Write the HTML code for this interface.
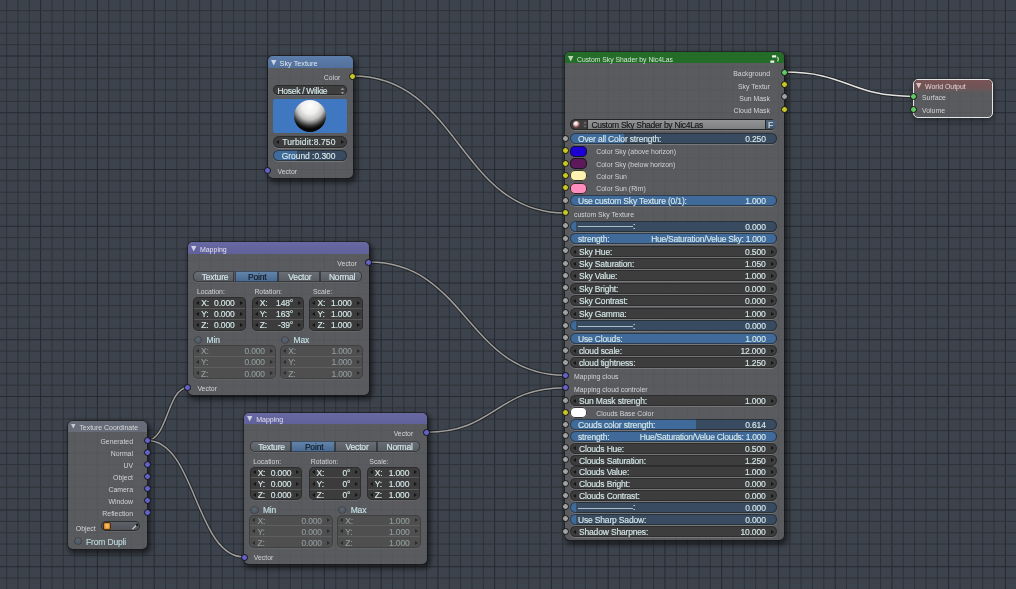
<!DOCTYPE html>
<html><head><meta charset="utf-8"><style>
html,body{margin:0;padding:0;width:1016px;height:589px;overflow:hidden;background:#3d434c;}
body{position:relative;font-family:"Liberation Sans",sans-serif;}
#root{position:absolute;left:0;top:0;width:1016px;height:589px;will-change:transform;}
#root>div,#root>span,#root>svg{position:absolute;}
.t{position:absolute;white-space:pre;}
.tc{text-align:center;}
.ic{position:absolute;overflow:visible;}
.sk{position:absolute;width:7px;height:7px;border-radius:50%;box-sizing:border-box;border:1px solid #111;}
</style></head><body><div id="root">
<svg style="position:absolute;left:0;top:0" width="1016" height="589"><rect x="6.1" y="0" width="1" height="589" fill="#2e333a"/><rect x="17.45" y="0" width="1" height="589" fill="#2e333a"/><rect x="28.8" y="0" width="1" height="589" fill="#2e333a"/><rect x="40.15" y="0" width="1" height="589" fill="#262a30"/><rect x="51.5" y="0" width="1" height="589" fill="#2e333a"/><rect x="62.85" y="0" width="1" height="589" fill="#2e333a"/><rect x="74.2" y="0" width="1" height="589" fill="#2e333a"/><rect x="85.55" y="0" width="1" height="589" fill="#2e333a"/><rect x="96.9" y="0" width="1" height="589" fill="#262a30"/><rect x="108.25" y="0" width="1" height="589" fill="#2e333a"/><rect x="119.6" y="0" width="1" height="589" fill="#2e333a"/><rect x="130.95" y="0" width="1" height="589" fill="#2e333a"/><rect x="142.3" y="0" width="1" height="589" fill="#2e333a"/><rect x="153.65" y="0" width="1" height="589" fill="#262a30"/><rect x="165" y="0" width="1" height="589" fill="#2e333a"/><rect x="176.35" y="0" width="1" height="589" fill="#2e333a"/><rect x="187.7" y="0" width="1" height="589" fill="#2e333a"/><rect x="199.05" y="0" width="1" height="589" fill="#2e333a"/><rect x="210.4" y="0" width="1" height="589" fill="#262a30"/><rect x="221.75" y="0" width="1" height="589" fill="#2e333a"/><rect x="233.1" y="0" width="1" height="589" fill="#2e333a"/><rect x="244.45" y="0" width="1" height="589" fill="#2e333a"/><rect x="255.8" y="0" width="1" height="589" fill="#2e333a"/><rect x="267.15" y="0" width="1" height="589" fill="#262a30"/><rect x="278.5" y="0" width="1" height="589" fill="#2e333a"/><rect x="289.85" y="0" width="1" height="589" fill="#2e333a"/><rect x="301.2" y="0" width="1" height="589" fill="#2e333a"/><rect x="312.55" y="0" width="1" height="589" fill="#2e333a"/><rect x="323.9" y="0" width="1" height="589" fill="#262a30"/><rect x="335.25" y="0" width="1" height="589" fill="#2e333a"/><rect x="346.6" y="0" width="1" height="589" fill="#2e333a"/><rect x="357.95" y="0" width="1" height="589" fill="#2e333a"/><rect x="369.3" y="0" width="1" height="589" fill="#2e333a"/><rect x="380.65" y="0" width="1" height="589" fill="#262a30"/><rect x="392" y="0" width="1" height="589" fill="#2e333a"/><rect x="403.35" y="0" width="1" height="589" fill="#2e333a"/><rect x="414.7" y="0" width="1" height="589" fill="#2e333a"/><rect x="426.05" y="0" width="1" height="589" fill="#2e333a"/><rect x="437.4" y="0" width="1" height="589" fill="#262a30"/><rect x="448.75" y="0" width="1" height="589" fill="#2e333a"/><rect x="460.1" y="0" width="1" height="589" fill="#2e333a"/><rect x="471.45" y="0" width="1" height="589" fill="#2e333a"/><rect x="482.8" y="0" width="1" height="589" fill="#2e333a"/><rect x="494.15" y="0" width="1" height="589" fill="#262a30"/><rect x="505.5" y="0" width="1" height="589" fill="#2e333a"/><rect x="516.85" y="0" width="1" height="589" fill="#2e333a"/><rect x="528.2" y="0" width="1" height="589" fill="#2e333a"/><rect x="539.55" y="0" width="1" height="589" fill="#2e333a"/><rect x="550.9" y="0" width="1" height="589" fill="#262a30"/><rect x="562.25" y="0" width="1" height="589" fill="#2e333a"/><rect x="573.6" y="0" width="1" height="589" fill="#2e333a"/><rect x="584.95" y="0" width="1" height="589" fill="#2e333a"/><rect x="596.3" y="0" width="1" height="589" fill="#2e333a"/><rect x="607.65" y="0" width="1" height="589" fill="#262a30"/><rect x="619" y="0" width="1" height="589" fill="#2e333a"/><rect x="630.35" y="0" width="1" height="589" fill="#2e333a"/><rect x="641.7" y="0" width="1" height="589" fill="#2e333a"/><rect x="653.05" y="0" width="1" height="589" fill="#2e333a"/><rect x="664.4" y="0" width="1" height="589" fill="#262a30"/><rect x="675.75" y="0" width="1" height="589" fill="#2e333a"/><rect x="687.1" y="0" width="1" height="589" fill="#2e333a"/><rect x="698.45" y="0" width="1" height="589" fill="#2e333a"/><rect x="709.8" y="0" width="1" height="589" fill="#2e333a"/><rect x="721.15" y="0" width="1" height="589" fill="#262a30"/><rect x="732.5" y="0" width="1" height="589" fill="#2e333a"/><rect x="743.85" y="0" width="1" height="589" fill="#2e333a"/><rect x="755.2" y="0" width="1" height="589" fill="#2e333a"/><rect x="766.55" y="0" width="1" height="589" fill="#2e333a"/><rect x="777.9" y="0" width="1" height="589" fill="#262a30"/><rect x="789.25" y="0" width="1" height="589" fill="#2e333a"/><rect x="800.6" y="0" width="1" height="589" fill="#2e333a"/><rect x="811.95" y="0" width="1" height="589" fill="#2e333a"/><rect x="823.3" y="0" width="1" height="589" fill="#2e333a"/><rect x="834.65" y="0" width="1" height="589" fill="#262a30"/><rect x="846" y="0" width="1" height="589" fill="#2e333a"/><rect x="857.35" y="0" width="1" height="589" fill="#2e333a"/><rect x="868.7" y="0" width="1" height="589" fill="#2e333a"/><rect x="880.05" y="0" width="1" height="589" fill="#2e333a"/><rect x="891.4" y="0" width="1" height="589" fill="#262a30"/><rect x="902.75" y="0" width="1" height="589" fill="#2e333a"/><rect x="914.1" y="0" width="1" height="589" fill="#2e333a"/><rect x="925.45" y="0" width="1" height="589" fill="#2e333a"/><rect x="936.8" y="0" width="1" height="589" fill="#2e333a"/><rect x="948.15" y="0" width="1" height="589" fill="#262a30"/><rect x="959.5" y="0" width="1" height="589" fill="#2e333a"/><rect x="970.85" y="0" width="1" height="589" fill="#2e333a"/><rect x="982.2" y="0" width="1" height="589" fill="#2e333a"/><rect x="993.55" y="0" width="1" height="589" fill="#2e333a"/><rect x="1004.9" y="0" width="1" height="589" fill="#262a30"/><rect x="1016.25" y="0" width="1" height="589" fill="#2e333a"/><rect x="0" y="10.1" width="1016" height="1" fill="#2e333a"/><rect x="0" y="21.45" width="1016" height="1" fill="#2e333a"/><rect x="0" y="32.8" width="1016" height="1" fill="#2e333a"/><rect x="0" y="44.15" width="1016" height="1" fill="#2e333a"/><rect x="0" y="55.5" width="1016" height="1" fill="#262a30"/><rect x="0" y="66.85" width="1016" height="1" fill="#2e333a"/><rect x="0" y="78.2" width="1016" height="1" fill="#2e333a"/><rect x="0" y="89.55" width="1016" height="1" fill="#2e333a"/><rect x="0" y="100.9" width="1016" height="1" fill="#2e333a"/><rect x="0" y="112.25" width="1016" height="1" fill="#262a30"/><rect x="0" y="123.6" width="1016" height="1" fill="#2e333a"/><rect x="0" y="134.95" width="1016" height="1" fill="#2e333a"/><rect x="0" y="146.3" width="1016" height="1" fill="#2e333a"/><rect x="0" y="157.65" width="1016" height="1" fill="#2e333a"/><rect x="0" y="169" width="1016" height="1" fill="#262a30"/><rect x="0" y="180.35" width="1016" height="1" fill="#2e333a"/><rect x="0" y="191.7" width="1016" height="1" fill="#2e333a"/><rect x="0" y="203.05" width="1016" height="1" fill="#2e333a"/><rect x="0" y="214.4" width="1016" height="1" fill="#2e333a"/><rect x="0" y="225.75" width="1016" height="1" fill="#262a30"/><rect x="0" y="237.1" width="1016" height="1" fill="#2e333a"/><rect x="0" y="248.45" width="1016" height="1" fill="#2e333a"/><rect x="0" y="259.8" width="1016" height="1" fill="#2e333a"/><rect x="0" y="271.15" width="1016" height="1" fill="#2e333a"/><rect x="0" y="282.5" width="1016" height="1" fill="#262a30"/><rect x="0" y="293.85" width="1016" height="1" fill="#2e333a"/><rect x="0" y="305.2" width="1016" height="1" fill="#2e333a"/><rect x="0" y="316.55" width="1016" height="1" fill="#2e333a"/><rect x="0" y="327.9" width="1016" height="1" fill="#2e333a"/><rect x="0" y="339.25" width="1016" height="1" fill="#262a30"/><rect x="0" y="350.6" width="1016" height="1" fill="#2e333a"/><rect x="0" y="361.95" width="1016" height="1" fill="#2e333a"/><rect x="0" y="373.3" width="1016" height="1" fill="#2e333a"/><rect x="0" y="384.65" width="1016" height="1" fill="#2e333a"/><rect x="0" y="396" width="1016" height="1" fill="#262a30"/><rect x="0" y="407.35" width="1016" height="1" fill="#2e333a"/><rect x="0" y="418.7" width="1016" height="1" fill="#2e333a"/><rect x="0" y="430.05" width="1016" height="1" fill="#2e333a"/><rect x="0" y="441.4" width="1016" height="1" fill="#2e333a"/><rect x="0" y="452.75" width="1016" height="1" fill="#262a30"/><rect x="0" y="464.1" width="1016" height="1" fill="#2e333a"/><rect x="0" y="475.45" width="1016" height="1" fill="#2e333a"/><rect x="0" y="486.8" width="1016" height="1" fill="#2e333a"/><rect x="0" y="498.15" width="1016" height="1" fill="#2e333a"/><rect x="0" y="509.5" width="1016" height="1" fill="#262a30"/><rect x="0" y="520.85" width="1016" height="1" fill="#2e333a"/><rect x="0" y="532.2" width="1016" height="1" fill="#2e333a"/><rect x="0" y="543.55" width="1016" height="1" fill="#2e333a"/><rect x="0" y="554.9" width="1016" height="1" fill="#2e333a"/><rect x="0" y="566.25" width="1016" height="1" fill="#262a30"/><rect x="0" y="577.6" width="1016" height="1" fill="#2e333a"/><rect x="0" y="588.95" width="1016" height="1" fill="#2e333a"/></svg><svg style="position:absolute;left:0;top:0" width="1016" height="589"><path d="M353 76 C459 76 459 213 565 213" stroke="#1e1e1e" stroke-opacity="0.75" stroke-width="3.4" fill="none"/><path d="M353 76 C459 76 459 213 565 213" stroke="#9e9e9e" stroke-width="1.5" fill="none"/><path d="M369 262.1 C467 262.1 467 375.2 565 375.2" stroke="#1e1e1e" stroke-opacity="0.75" stroke-width="3.4" fill="none"/><path d="M369 262.1 C467 262.1 467 375.2 565 375.2" stroke="#9e9e9e" stroke-width="1.5" fill="none"/><path d="M426.6 432.2 C495.8 432.2 495.8 387.7 565 387.7" stroke="#1e1e1e" stroke-opacity="0.75" stroke-width="3.4" fill="none"/><path d="M426.6 432.2 C495.8 432.2 495.8 387.7 565 387.7" stroke="#9e9e9e" stroke-width="1.5" fill="none"/><path d="M147 440.4 C167.5 440.4 167.5 387.4 188 387.4" stroke="#1e1e1e" stroke-opacity="0.75" stroke-width="3.4" fill="none"/><path d="M147 440.4 C167.5 440.4 167.5 387.4 188 387.4" stroke="#9e9e9e" stroke-width="1.5" fill="none"/><path d="M147 440.4 C195.6 440.4 195.6 557 244.2 557" stroke="#1e1e1e" stroke-opacity="0.75" stroke-width="3.4" fill="none"/><path d="M147 440.4 C195.6 440.4 195.6 557 244.2 557" stroke="#9e9e9e" stroke-width="1.5" fill="none"/><path d="M784 72.1 C848.7 72.1 848.7 96.4 913.4 96.4" stroke="#1e1e1e" stroke-opacity="0.75" stroke-width="3.4" fill="none"/><path d="M784 72.1 C848.7 72.1 848.7 96.4 913.4 96.4" stroke="#e4e4e4" stroke-width="1.5" fill="none"/></svg><div style="left:565px;top:52px;width:219px;height:487.8px;border-radius:5px;background:rgba(98,97,100,0.8);overflow:hidden;box-shadow:0 0 0 1px rgba(20,20,20,0.5),2px 3px 5px 2px rgba(0,0,0,0.5);"><div style="position:absolute;left:0;top:0;width:100%;height:11.2px;background:#246d28"></div></div><svg class="ic" style="left:568.2px;top:55.8px" width="6" height="6"><path d="M0 0 H5.4 L2.7 5.4 Z" fill="#d4e8d2" opacity="0.85"/></svg><span class="t" style="left:577px;top:53.9px;line-height:12px;font-size:6.8px;color:#d4e8d2;">Custom Sky Shader by Nic4Las</span><svg class="ic" style="left:769px;top:53.5px" width="12" height="10"><rect x="3" y="1.3" width="4.2" height="2.3" rx="0.6" fill="#f0f4ee"/><rect x="1.3" y="6.5" width="4" height="2.3" rx="0.6" fill="#f0f4ee"/><path d="M8.3 2.8 Q10.2 4.9 8.6 7.5" stroke="#b8dcb8" stroke-width="1.1" fill="none"/></svg><span class="t" style="right:246px;top:68.3px;line-height:12px;font-size:6.9px;color:#d4d4d4;">Background</span><span class="t" style="right:246px;top:80.6px;line-height:12px;font-size:6.9px;color:#d4d4d4;">Sky Textur</span><span class="t" style="right:246px;top:93.1px;line-height:12px;font-size:6.9px;color:#d4d4d4;">Sun Mask</span><span class="t" style="right:246px;top:105.2px;line-height:12px;font-size:6.9px;color:#d4d4d4;">Cloud Mask</span><div style="left:570.1px;top:119.3px;width:206.4px;height:10.4px;border-radius:5.2px;background:#3d3d3d;box-shadow:inset 0 0 0 1px rgba(25,25,25,0.7),0 0.9px 0 rgba(215,215,215,0.24)"></div><div style="left:587.9px;top:120px;width:177.4px;height:9px;background:linear-gradient(#929496,#7e8082);"></div><div style="left:587.4px;top:119.3px;width:0.8px;height:10.4px;background:#2a2a2a"></div><div style="left:765.3px;top:119.3px;width:0.8px;height:10.4px;background:#2a2a2a"></div><div style="left:766.1px;top:119.8px;width:10.6px;height:9.4px;border-radius:0 4.7px 4.7px 0;background:linear-gradient(#52657a,#44556a);"></div><span class="t tc" style="left:670.4px;width:200px;top:118.8px;line-height:12px;font-size:8.5px;color:#cfe0ea;letter-spacing:-0.17px;-webkit-text-stroke:0.14px currentColor;">F</span><span class="t" style="left:591.4px;top:118.9px;line-height:12px;font-size:8.5px;color:#161616;-webkit-text-stroke:0.14px currentColor;letter-spacing:-0.3px;">Custom Sky Shader by Nic4Las</span><div style="left:573.1px;top:120.8px;width:7px;height:7px;border-radius:50%;background:radial-gradient(circle at 40% 35%,#fff 0,#e8dede 25%,#9a5a5a 55%,#3a2a2a 85%)"></div><svg class="ic" style="left:582.6px;top:121px" width="4" height="7"><path d="M0.3 2.6 L2 0.6 L3.7 2.6 Z M0.3 4.4 L2 6.4 L3.7 4.4 Z" fill="#777"/></svg><div style="left:570px;top:133.15px;width:206.5px;height:11px;border-radius:5.5px;background:linear-gradient(to right,#3f6a99 0,#3f6a99 54.38px,#394b60 54.38px);box-shadow:inset 0 0 0 1px rgba(30,30,30,0.6),0 0.9px 0 rgba(215,215,215,0.24)"></div><span class="t" style="left:578px;top:133.15px;line-height:12px;font-size:8.5px;color:#d6e8ea;letter-spacing:-0.17px;-webkit-text-stroke:0.14px currentColor;">Over all Color strength:</span><span class="t" style="right:250.3px;top:133.15px;line-height:12px;font-size:8.5px;color:#d6e8ea;letter-spacing:-0.17px;-webkit-text-stroke:0.14px currentColor;">0.250</span><div style="left:570.2px;top:145.5px;width:16.6px;height:11px;border-radius:5px;background:#1c00d2;box-shadow:inset 0 0 0 1px rgba(20,20,20,0.85)"></div><span class="t" style="left:596.3px;top:146px;line-height:12px;font-size:6.9px;color:#d4d4d4;">Color Sky (above horizon)</span><div style="left:570.2px;top:158px;width:16.6px;height:11px;border-radius:5px;background:#5c1a5a;box-shadow:inset 0 0 0 1px rgba(20,20,20,0.85)"></div><span class="t" style="left:596.3px;top:158.5px;line-height:12px;font-size:6.9px;color:#d4d4d4;">Color Sky (below horizon)</span><div style="left:570.2px;top:170.4px;width:16.6px;height:11px;border-radius:5px;background:#fff2b0;box-shadow:inset 0 0 0 1px rgba(20,20,20,0.85)"></div><span class="t" style="left:596.3px;top:170.9px;line-height:12px;font-size:6.9px;color:#d4d4d4;">Color Sun</span><div style="left:570.2px;top:182.8px;width:16.6px;height:11px;border-radius:5px;background:#ff8ebe;box-shadow:inset 0 0 0 1px rgba(20,20,20,0.85)"></div><span class="t" style="left:596.3px;top:183.3px;line-height:12px;font-size:6.9px;color:#d4d4d4;">Color Sun (Rim)</span><div style="left:570px;top:195.35px;width:206.5px;height:11px;border-radius:5.5px;background:linear-gradient(to right,#3f6a99 0,#3f6a99 206.5px,#394b60 206.5px);box-shadow:inset 0 0 0 1px rgba(30,30,30,0.6),0 0.9px 0 rgba(215,215,215,0.24)"></div><span class="t" style="left:578px;top:195.35px;line-height:12px;font-size:8.5px;color:#d6e8ea;letter-spacing:-0.17px;-webkit-text-stroke:0.14px currentColor;">Use custom Sky Texture (0/1):</span><span class="t" style="right:250.3px;top:195.35px;line-height:12px;font-size:8.5px;color:#d6e8ea;letter-spacing:-0.17px;-webkit-text-stroke:0.14px currentColor;">1.000</span><span class="t" style="left:574px;top:209.1px;line-height:12px;font-size:6.9px;color:#d4d4d4;">custom Sky Texture</span><div style="left:570px;top:220.65px;width:206.5px;height:11px;border-radius:5.5px;background:linear-gradient(to right,#3f6a99 0,#3f6a99 5.5px,#394b60 5.5px);box-shadow:inset 0 0 0 1px rgba(30,30,30,0.6),0 0.9px 0 rgba(215,215,215,0.24)"></div><span class="t" style="right:250.3px;top:220.65px;line-height:12px;font-size:8.5px;color:#d6e8ea;letter-spacing:-0.17px;-webkit-text-stroke:0.14px currentColor;">0.000</span><div style="left:578px;top:226.3px;width:55px;height:0.9px;background:#a9bfcc"></div><span class="t" style="left:633px;top:220.1px;line-height:12px;font-size:8.5px;color:#d6e8ea;letter-spacing:-0.17px;-webkit-text-stroke:0.14px currentColor;">:</span><div style="left:570px;top:233.35px;width:206.5px;height:11px;border-radius:5.5px;background:linear-gradient(to right,#3f6a99 0,#3f6a99 206.5px,#394b60 206.5px);box-shadow:inset 0 0 0 1px rgba(30,30,30,0.6),0 0.9px 0 rgba(215,215,215,0.24)"></div><span class="t" style="left:578px;top:233.35px;line-height:12px;font-size:8.5px;color:#d6e8ea;letter-spacing:-0.17px;-webkit-text-stroke:0.14px currentColor;">strength:</span><span class="t" style="right:250.3px;top:233.35px;line-height:12px;font-size:8.5px;color:#d6e8ea;-webkit-text-stroke:0.14px currentColor;letter-spacing:-0.27px;">Hue/Saturation/Velue Sky: 1.000</span><div style="left:570px;top:245.85px;width:206.5px;height:11px;border-radius:5.5px;background:#3d3d3d;box-shadow:inset 0 0 0 1px rgba(30,30,30,0.5),0 0.9px 0 rgba(215,215,215,0.24)"></div><svg class="ic" style="left:573px;top:249.55px" width="3" height="4"><path d="M3 0 L0 2 L3 4 Z" fill="#161616"/></svg><svg class="ic" style="left:770.5px;top:249.55px" width="3" height="4"><path d="M0 0 L3 2 L0 4 Z" fill="#161616"/></svg><span class="t" style="left:579px;top:245.85px;line-height:12px;font-size:8.5px;color:#d6e8ea;letter-spacing:-0.17px;-webkit-text-stroke:0.14px currentColor;">Sky Hue:</span><span class="t" style="right:250.5px;top:245.85px;line-height:12px;font-size:8.5px;color:#d6e8ea;letter-spacing:-0.17px;-webkit-text-stroke:0.14px currentColor;">0.500</span><div style="left:570px;top:258.05px;width:206.5px;height:11px;border-radius:5.5px;background:#3d3d3d;box-shadow:inset 0 0 0 1px rgba(30,30,30,0.5),0 0.9px 0 rgba(215,215,215,0.24)"></div><svg class="ic" style="left:573px;top:261.75px" width="3" height="4"><path d="M3 0 L0 2 L3 4 Z" fill="#161616"/></svg><svg class="ic" style="left:770.5px;top:261.75px" width="3" height="4"><path d="M0 0 L3 2 L0 4 Z" fill="#161616"/></svg><span class="t" style="left:579px;top:258.05px;line-height:12px;font-size:8.5px;color:#d6e8ea;letter-spacing:-0.17px;-webkit-text-stroke:0.14px currentColor;">Sky Saturation:</span><span class="t" style="right:250.5px;top:258.05px;line-height:12px;font-size:8.5px;color:#d6e8ea;letter-spacing:-0.17px;-webkit-text-stroke:0.14px currentColor;">1.050</span><div style="left:570px;top:270.45px;width:206.5px;height:11px;border-radius:5.5px;background:#3d3d3d;box-shadow:inset 0 0 0 1px rgba(30,30,30,0.5),0 0.9px 0 rgba(215,215,215,0.24)"></div><svg class="ic" style="left:573px;top:274.15px" width="3" height="4"><path d="M3 0 L0 2 L3 4 Z" fill="#161616"/></svg><svg class="ic" style="left:770.5px;top:274.15px" width="3" height="4"><path d="M0 0 L3 2 L0 4 Z" fill="#161616"/></svg><span class="t" style="left:579px;top:270.45px;line-height:12px;font-size:8.5px;color:#d6e8ea;letter-spacing:-0.17px;-webkit-text-stroke:0.14px currentColor;">Sky Value:</span><span class="t" style="right:250.5px;top:270.45px;line-height:12px;font-size:8.5px;color:#d6e8ea;letter-spacing:-0.17px;-webkit-text-stroke:0.14px currentColor;">1.000</span><div style="left:570px;top:282.85px;width:206.5px;height:11px;border-radius:5.5px;background:#3d3d3d;box-shadow:inset 0 0 0 1px rgba(30,30,30,0.5),0 0.9px 0 rgba(215,215,215,0.24)"></div><svg class="ic" style="left:573px;top:286.55px" width="3" height="4"><path d="M3 0 L0 2 L3 4 Z" fill="#161616"/></svg><svg class="ic" style="left:770.5px;top:286.55px" width="3" height="4"><path d="M0 0 L3 2 L0 4 Z" fill="#161616"/></svg><span class="t" style="left:579px;top:282.85px;line-height:12px;font-size:8.5px;color:#d6e8ea;letter-spacing:-0.17px;-webkit-text-stroke:0.14px currentColor;">Sky Bright:</span><span class="t" style="right:250.5px;top:282.85px;line-height:12px;font-size:8.5px;color:#d6e8ea;letter-spacing:-0.17px;-webkit-text-stroke:0.14px currentColor;">0.000</span><div style="left:570px;top:295.35px;width:206.5px;height:11px;border-radius:5.5px;background:#3d3d3d;box-shadow:inset 0 0 0 1px rgba(30,30,30,0.5),0 0.9px 0 rgba(215,215,215,0.24)"></div><svg class="ic" style="left:573px;top:299.05px" width="3" height="4"><path d="M3 0 L0 2 L3 4 Z" fill="#161616"/></svg><svg class="ic" style="left:770.5px;top:299.05px" width="3" height="4"><path d="M0 0 L3 2 L0 4 Z" fill="#161616"/></svg><span class="t" style="left:579px;top:295.35px;line-height:12px;font-size:8.5px;color:#d6e8ea;letter-spacing:-0.17px;-webkit-text-stroke:0.14px currentColor;">Sky Contrast:</span><span class="t" style="right:250.5px;top:295.35px;line-height:12px;font-size:8.5px;color:#d6e8ea;letter-spacing:-0.17px;-webkit-text-stroke:0.14px currentColor;">0.000</span><div style="left:570px;top:307.85px;width:206.5px;height:11px;border-radius:5.5px;background:#3d3d3d;box-shadow:inset 0 0 0 1px rgba(30,30,30,0.5),0 0.9px 0 rgba(215,215,215,0.24)"></div><svg class="ic" style="left:573px;top:311.55px" width="3" height="4"><path d="M3 0 L0 2 L3 4 Z" fill="#161616"/></svg><svg class="ic" style="left:770.5px;top:311.55px" width="3" height="4"><path d="M0 0 L3 2 L0 4 Z" fill="#161616"/></svg><span class="t" style="left:579px;top:307.85px;line-height:12px;font-size:8.5px;color:#d6e8ea;letter-spacing:-0.17px;-webkit-text-stroke:0.14px currentColor;">Sky Gamma:</span><span class="t" style="right:250.5px;top:307.85px;line-height:12px;font-size:8.5px;color:#d6e8ea;letter-spacing:-0.17px;-webkit-text-stroke:0.14px currentColor;">1.000</span><div style="left:570px;top:320.35px;width:206.5px;height:11px;border-radius:5.5px;background:linear-gradient(to right,#3f6a99 0,#3f6a99 5.5px,#394b60 5.5px);box-shadow:inset 0 0 0 1px rgba(30,30,30,0.6),0 0.9px 0 rgba(215,215,215,0.24)"></div><span class="t" style="right:250.3px;top:320.35px;line-height:12px;font-size:8.5px;color:#d6e8ea;letter-spacing:-0.17px;-webkit-text-stroke:0.14px currentColor;">0.000</span><div style="left:578px;top:326px;width:55px;height:0.9px;background:#a9bfcc"></div><span class="t" style="left:633px;top:319.8px;line-height:12px;font-size:8.5px;color:#d6e8ea;letter-spacing:-0.17px;-webkit-text-stroke:0.14px currentColor;">:</span><div style="left:570px;top:332.65px;width:206.5px;height:11px;border-radius:5.5px;background:linear-gradient(to right,#3f6a99 0,#3f6a99 206.5px,#394b60 206.5px);box-shadow:inset 0 0 0 1px rgba(30,30,30,0.6),0 0.9px 0 rgba(215,215,215,0.24)"></div><span class="t" style="left:578px;top:332.65px;line-height:12px;font-size:8.5px;color:#d6e8ea;letter-spacing:-0.17px;-webkit-text-stroke:0.14px currentColor;">Use Clouds:</span><span class="t" style="right:250.3px;top:332.65px;line-height:12px;font-size:8.5px;color:#d6e8ea;letter-spacing:-0.17px;-webkit-text-stroke:0.14px currentColor;">1.000</span><div style="left:570px;top:345.05px;width:206.5px;height:11px;border-radius:5.5px;background:#3d3d3d;box-shadow:inset 0 0 0 1px rgba(30,30,30,0.5),0 0.9px 0 rgba(215,215,215,0.24)"></div><svg class="ic" style="left:573px;top:348.75px" width="3" height="4"><path d="M3 0 L0 2 L3 4 Z" fill="#161616"/></svg><svg class="ic" style="left:770.5px;top:348.75px" width="3" height="4"><path d="M0 0 L3 2 L0 4 Z" fill="#161616"/></svg><span class="t" style="left:579px;top:345.05px;line-height:12px;font-size:8.5px;color:#d6e8ea;letter-spacing:-0.17px;-webkit-text-stroke:0.14px currentColor;">cloud scale:</span><span class="t" style="right:250.5px;top:345.05px;line-height:12px;font-size:8.5px;color:#d6e8ea;letter-spacing:-0.17px;-webkit-text-stroke:0.14px currentColor;">12.000</span><div style="left:570px;top:357.45px;width:206.5px;height:11px;border-radius:5.5px;background:#3d3d3d;box-shadow:inset 0 0 0 1px rgba(30,30,30,0.5),0 0.9px 0 rgba(215,215,215,0.24)"></div><svg class="ic" style="left:573px;top:361.15px" width="3" height="4"><path d="M3 0 L0 2 L3 4 Z" fill="#161616"/></svg><svg class="ic" style="left:770.5px;top:361.15px" width="3" height="4"><path d="M0 0 L3 2 L0 4 Z" fill="#161616"/></svg><span class="t" style="left:579px;top:357.45px;line-height:12px;font-size:8.5px;color:#d6e8ea;letter-spacing:-0.17px;-webkit-text-stroke:0.14px currentColor;">cloud tightness:</span><span class="t" style="right:250.5px;top:357.45px;line-height:12px;font-size:8.5px;color:#d6e8ea;letter-spacing:-0.17px;-webkit-text-stroke:0.14px currentColor;">1.250</span><span class="t" style="left:574px;top:371.3px;line-height:12px;font-size:6.9px;color:#d4d4d4;">Mapping clous</span><span class="t" style="left:574px;top:383.8px;line-height:12px;font-size:6.9px;color:#d4d4d4;">Mapping cloud controler</span><div style="left:570px;top:395.25px;width:206.5px;height:11px;border-radius:5.5px;background:#3d3d3d;box-shadow:inset 0 0 0 1px rgba(30,30,30,0.5),0 0.9px 0 rgba(215,215,215,0.24)"></div><svg class="ic" style="left:573px;top:398.95px" width="3" height="4"><path d="M3 0 L0 2 L3 4 Z" fill="#161616"/></svg><svg class="ic" style="left:770.5px;top:398.95px" width="3" height="4"><path d="M0 0 L3 2 L0 4 Z" fill="#161616"/></svg><span class="t" style="left:579px;top:395.25px;line-height:12px;font-size:8.5px;color:#d6e8ea;letter-spacing:-0.17px;-webkit-text-stroke:0.14px currentColor;">Sun Mask strengh:</span><span class="t" style="right:250.5px;top:395.25px;line-height:12px;font-size:8.5px;color:#d6e8ea;letter-spacing:-0.17px;-webkit-text-stroke:0.14px currentColor;">1.000</span><div style="left:570.2px;top:407.2px;width:16.6px;height:11px;border-radius:5px;background:#ffffff;box-shadow:inset 0 0 0 1px rgba(20,20,20,0.85)"></div><span class="t" style="left:596.3px;top:407.7px;line-height:12px;font-size:6.9px;color:#d4d4d4;">Clouds Base Color</span><div style="left:570px;top:419.05px;width:206.5px;height:11px;border-radius:5.5px;background:linear-gradient(to right,#3f6a99 0,#3f6a99 125.54px,#394b60 125.54px);box-shadow:inset 0 0 0 1px rgba(30,30,30,0.6),0 0.9px 0 rgba(215,215,215,0.24)"></div><span class="t" style="left:578px;top:419.05px;line-height:12px;font-size:8.5px;color:#d6e8ea;letter-spacing:-0.17px;-webkit-text-stroke:0.14px currentColor;">Couds color strength:</span><span class="t" style="right:250.3px;top:419.05px;line-height:12px;font-size:8.5px;color:#d6e8ea;letter-spacing:-0.17px;-webkit-text-stroke:0.14px currentColor;">0.614</span><div style="left:570px;top:430.85px;width:206.5px;height:11px;border-radius:5.5px;background:linear-gradient(to right,#3f6a99 0,#3f6a99 206.5px,#394b60 206.5px);box-shadow:inset 0 0 0 1px rgba(30,30,30,0.6),0 0.9px 0 rgba(215,215,215,0.24)"></div><span class="t" style="left:578px;top:430.85px;line-height:12px;font-size:8.5px;color:#d6e8ea;letter-spacing:-0.17px;-webkit-text-stroke:0.14px currentColor;">strength:</span><span class="t" style="right:250.3px;top:430.85px;line-height:12px;font-size:8.5px;color:#d6e8ea;-webkit-text-stroke:0.14px currentColor;letter-spacing:-0.27px;">Hue/Saturation/Velue Clouds: 1.000</span><div style="left:570px;top:442.75px;width:206.5px;height:11px;border-radius:5.5px;background:#3d3d3d;box-shadow:inset 0 0 0 1px rgba(30,30,30,0.5),0 0.9px 0 rgba(215,215,215,0.24)"></div><svg class="ic" style="left:573px;top:446.45px" width="3" height="4"><path d="M3 0 L0 2 L3 4 Z" fill="#161616"/></svg><svg class="ic" style="left:770.5px;top:446.45px" width="3" height="4"><path d="M0 0 L3 2 L0 4 Z" fill="#161616"/></svg><span class="t" style="left:579px;top:442.75px;line-height:12px;font-size:8.5px;color:#d6e8ea;letter-spacing:-0.17px;-webkit-text-stroke:0.14px currentColor;">Clouds Hue:</span><span class="t" style="right:250.5px;top:442.75px;line-height:12px;font-size:8.5px;color:#d6e8ea;letter-spacing:-0.17px;-webkit-text-stroke:0.14px currentColor;">0.500</span><div style="left:570px;top:454.55px;width:206.5px;height:11px;border-radius:5.5px;background:#3d3d3d;box-shadow:inset 0 0 0 1px rgba(30,30,30,0.5),0 0.9px 0 rgba(215,215,215,0.24)"></div><svg class="ic" style="left:573px;top:458.25px" width="3" height="4"><path d="M3 0 L0 2 L3 4 Z" fill="#161616"/></svg><svg class="ic" style="left:770.5px;top:458.25px" width="3" height="4"><path d="M0 0 L3 2 L0 4 Z" fill="#161616"/></svg><span class="t" style="left:579px;top:454.55px;line-height:12px;font-size:8.5px;color:#d6e8ea;letter-spacing:-0.17px;-webkit-text-stroke:0.14px currentColor;">Clouds Saturation:</span><span class="t" style="right:250.5px;top:454.55px;line-height:12px;font-size:8.5px;color:#d6e8ea;letter-spacing:-0.17px;-webkit-text-stroke:0.14px currentColor;">1.250</span><div style="left:570px;top:466.45px;width:206.5px;height:11px;border-radius:5.5px;background:#3d3d3d;box-shadow:inset 0 0 0 1px rgba(30,30,30,0.5),0 0.9px 0 rgba(215,215,215,0.24)"></div><svg class="ic" style="left:573px;top:470.15px" width="3" height="4"><path d="M3 0 L0 2 L3 4 Z" fill="#161616"/></svg><svg class="ic" style="left:770.5px;top:470.15px" width="3" height="4"><path d="M0 0 L3 2 L0 4 Z" fill="#161616"/></svg><span class="t" style="left:579px;top:466.45px;line-height:12px;font-size:8.5px;color:#d6e8ea;letter-spacing:-0.17px;-webkit-text-stroke:0.14px currentColor;">Clouds Value:</span><span class="t" style="right:250.5px;top:466.45px;line-height:12px;font-size:8.5px;color:#d6e8ea;letter-spacing:-0.17px;-webkit-text-stroke:0.14px currentColor;">1.000</span><div style="left:570px;top:478.25px;width:206.5px;height:11px;border-radius:5.5px;background:#3d3d3d;box-shadow:inset 0 0 0 1px rgba(30,30,30,0.5),0 0.9px 0 rgba(215,215,215,0.24)"></div><svg class="ic" style="left:573px;top:481.95px" width="3" height="4"><path d="M3 0 L0 2 L3 4 Z" fill="#161616"/></svg><svg class="ic" style="left:770.5px;top:481.95px" width="3" height="4"><path d="M0 0 L3 2 L0 4 Z" fill="#161616"/></svg><span class="t" style="left:579px;top:478.25px;line-height:12px;font-size:8.5px;color:#d6e8ea;letter-spacing:-0.17px;-webkit-text-stroke:0.14px currentColor;">Clouds Bright:</span><span class="t" style="right:250.5px;top:478.25px;line-height:12px;font-size:8.5px;color:#d6e8ea;letter-spacing:-0.17px;-webkit-text-stroke:0.14px currentColor;">0.000</span><div style="left:570px;top:490.15px;width:206.5px;height:11px;border-radius:5.5px;background:#3d3d3d;box-shadow:inset 0 0 0 1px rgba(30,30,30,0.5),0 0.9px 0 rgba(215,215,215,0.24)"></div><svg class="ic" style="left:573px;top:493.85px" width="3" height="4"><path d="M3 0 L0 2 L3 4 Z" fill="#161616"/></svg><svg class="ic" style="left:770.5px;top:493.85px" width="3" height="4"><path d="M0 0 L3 2 L0 4 Z" fill="#161616"/></svg><span class="t" style="left:579px;top:490.15px;line-height:12px;font-size:8.5px;color:#d6e8ea;letter-spacing:-0.17px;-webkit-text-stroke:0.14px currentColor;">Clouds Contrast:</span><span class="t" style="right:250.5px;top:490.15px;line-height:12px;font-size:8.5px;color:#d6e8ea;letter-spacing:-0.17px;-webkit-text-stroke:0.14px currentColor;">0.000</span><div style="left:570px;top:501.95px;width:206.5px;height:11px;border-radius:5.5px;background:linear-gradient(to right,#3f6a99 0,#3f6a99 5.5px,#394b60 5.5px);box-shadow:inset 0 0 0 1px rgba(30,30,30,0.6),0 0.9px 0 rgba(215,215,215,0.24)"></div><span class="t" style="right:250.3px;top:501.95px;line-height:12px;font-size:8.5px;color:#d6e8ea;letter-spacing:-0.17px;-webkit-text-stroke:0.14px currentColor;">0.000</span><div style="left:578px;top:507.6px;width:55px;height:0.9px;background:#a9bfcc"></div><span class="t" style="left:633px;top:501.4px;line-height:12px;font-size:8.5px;color:#d6e8ea;letter-spacing:-0.17px;-webkit-text-stroke:0.14px currentColor;">:</span><div style="left:570px;top:513.85px;width:206.5px;height:11px;border-radius:5.5px;background:linear-gradient(to right,#3f6a99 0,#3f6a99 5.5px,#394b60 5.5px);box-shadow:inset 0 0 0 1px rgba(30,30,30,0.6),0 0.9px 0 rgba(215,215,215,0.24)"></div><span class="t" style="left:578px;top:513.85px;line-height:12px;font-size:8.5px;color:#d6e8ea;letter-spacing:-0.17px;-webkit-text-stroke:0.14px currentColor;">Use Sharp Sadow:</span><span class="t" style="right:250.3px;top:513.85px;line-height:12px;font-size:8.5px;color:#d6e8ea;letter-spacing:-0.17px;-webkit-text-stroke:0.14px currentColor;">0.000</span><div style="left:570px;top:526.15px;width:206.5px;height:11px;border-radius:5.5px;background:#3d3d3d;box-shadow:inset 0 0 0 1px rgba(30,30,30,0.5),0 0.9px 0 rgba(215,215,215,0.24)"></div><svg class="ic" style="left:573px;top:529.85px" width="3" height="4"><path d="M3 0 L0 2 L3 4 Z" fill="#161616"/></svg><svg class="ic" style="left:770.5px;top:529.85px" width="3" height="4"><path d="M0 0 L3 2 L0 4 Z" fill="#161616"/></svg><span class="t" style="left:579px;top:526.15px;line-height:12px;font-size:8.5px;color:#d6e8ea;letter-spacing:-0.17px;-webkit-text-stroke:0.14px currentColor;">Shadow Sharpnes:</span><span class="t" style="right:250.5px;top:526.15px;line-height:12px;font-size:8.5px;color:#d6e8ea;letter-spacing:-0.17px;-webkit-text-stroke:0.14px currentColor;">10.000</span><div style="left:267.6px;top:56.1px;width:85.2px;height:121.5px;border-radius:5px;background:rgba(98,97,100,0.8);overflow:hidden;box-shadow:0 0 0 1px rgba(20,20,20,0.5),2px 3px 5px 2px rgba(0,0,0,0.5);"><div style="position:absolute;left:0;top:0;width:100%;height:12.2px;background:linear-gradient(#5d7dab,#52709b)"></div></div><svg class="ic" style="left:270.8px;top:59.9px" width="6" height="6"><path d="M0 0 H5.4 L2.7 5.4 Z" fill="#dfe6ee" opacity="0.85"/></svg><span class="t" style="left:279.6px;top:58px;line-height:12px;font-size:7.3px;color:#dfe6ee;">Sky Texture</span><span class="t" style="right:675.7px;top:72.3px;line-height:12px;font-size:6.9px;color:#d4d4d4;">Color</span><div style="left:273.2px;top:85.1px;width:73.4px;height:10.2px;border-radius:5px;background:#3e3e3e;box-shadow:inset 0 0 0 1px rgba(30,30,30,0.6),0 0.8px 0 rgba(200,200,200,0.15)"></div><span class="t" style="left:277.5px;top:84.5px;line-height:12px;font-size:8.5px;color:#d6e8ea;-webkit-text-stroke:0.14px currentColor;letter-spacing:-0.3px;">Hosek / Wilkie</span><svg class="ic" style="left:340px;top:86.5px" width="5" height="8"><path d="M0.5 3 L2.5 0.6 L4.5 3 Z M0.5 5 L2.5 7.4 L4.5 5 Z" fill="#8a8a8a"/></svg><div style="left:272.8px;top:98.6px;width:74px;height:34.2px;background:#3f78c0;border-radius:2px"></div><div style="left:293.7px;top:99.6px;width:32px;height:32px;border-radius:50%;background:radial-gradient(ellipse 27px 28px at 50% 18%,#ffffff 0,#f0efee 30%,#c4c4c4 50%,#808080 61%,#333 72%,#080808 82%,#000 100%)"></div><div style="left:273px;top:136px;width:73.9px;height:11.6px;border-radius:5.8px;background:#3d3d3d;box-shadow:inset 0 0 0 1px rgba(30,30,30,0.5),0 0.9px 0 rgba(215,215,215,0.24)"></div><svg class="ic" style="left:276px;top:140px" width="3" height="4"><path d="M3 0 L0 2 L3 4 Z" fill="#161616"/></svg><svg class="ic" style="left:340.9px;top:140px" width="3" height="4"><path d="M0 0 L3 2 L0 4 Z" fill="#161616"/></svg><span class="t" style="left:282px;top:136.3px;line-height:12px;font-size:8.5px;color:#d6e8ea;letter-spacing:-0.17px;-webkit-text-stroke:0.14px currentColor;"></span><span class="t" style="right:680.1px;top:136.3px;line-height:12px;font-size:8.5px;color:#d6e8ea;letter-spacing:-0.17px;-webkit-text-stroke:0.14px currentColor;"></span><span class="t tc" style="left:208.9px;width:200px;top:136.2px;line-height:12px;font-size:8.5px;color:#d6e8ea;-webkit-text-stroke:0.14px currentColor;letter-spacing:0.12px;">Turbidit:8.750</span><div style="left:273px;top:150px;width:73.9px;height:11.4px;border-radius:5.7px;background:linear-gradient(to right,#3f6a99 0,#3f6a99 24.45px,#394b60 24.45px);box-shadow:inset 0 0 0 1px rgba(30,30,30,0.6),0 0.9px 0 rgba(215,215,215,0.24)"></div><span class="t tc" style="left:208.6px;width:200px;top:150.1px;line-height:12px;font-size:8.5px;color:#d6e8ea;-webkit-text-stroke:0.14px currentColor;letter-spacing:-0.05px;">Ground :0.300</span><span class="t" style="left:277.5px;top:165.9px;line-height:12px;font-size:6.9px;color:#d4d4d4;">Vector</span><div style="left:187.9px;top:242px;width:181px;height:153.1px;border-radius:5px;background:rgba(98,97,100,0.8);overflow:hidden;box-shadow:0 0 0 1px rgba(20,20,20,0.5),2px 3px 5px 2px rgba(0,0,0,0.5);"><div style="position:absolute;left:0;top:0;width:100%;height:12px;background:linear-gradient(#6868a3,#60609a)"></div></div><svg class="ic" style="left:191.1px;top:245.8px" width="6" height="6"><path d="M0 0 H5.4 L2.7 5.4 Z" fill="#e2e2ee" opacity="0.85"/></svg><span class="t" style="left:199.9px;top:243.9px;line-height:12px;font-size:7.0px;color:#e2e2ee;">Mapping</span><span class="t" style="right:659.1px;top:257.9px;line-height:12px;font-size:6.9px;color:#d4d4d4;">Vector</span><div style="left:193.2px;top:271.2px;width:41.3px;height:11.2px;border-radius:5px 0 0 5px;background:linear-gradient(#6b7078,#565a61);box-shadow:inset 0 0 0 0.8px rgba(30,30,30,0.7),0 0.8px 0 rgba(200,200,200,0.15)"></div><span class="t tc" style="left:115.05px;width:200px;top:271.3px;line-height:12px;font-size:8.5px;color:#d6e8ea;letter-spacing:-0.17px;-webkit-text-stroke:0.14px currentColor;">Texture</span><div style="left:234.5px;top:271.2px;width:43.2px;height:11.2px;border-radius:0;background:linear-gradient(#6587ad,#48698f);box-shadow:inset 0 0 0 0.8px rgba(30,30,30,0.7),0 0.8px 0 rgba(200,200,200,0.15)"></div><span class="t tc" style="left:157.3px;width:200px;top:271.3px;line-height:12px;font-size:8.5px;color:#0e1622;letter-spacing:-0.17px;-webkit-text-stroke:0.14px currentColor;">Point</span><div style="left:277.7px;top:271.2px;width:41.9px;height:11.2px;border-radius:0;background:linear-gradient(#6b7078,#565a61);box-shadow:inset 0 0 0 0.8px rgba(30,30,30,0.7),0 0.8px 0 rgba(200,200,200,0.15)"></div><span class="t tc" style="left:199.85px;width:200px;top:271.3px;line-height:12px;font-size:8.5px;color:#d6e8ea;letter-spacing:-0.17px;-webkit-text-stroke:0.14px currentColor;">Vector</span><div style="left:319.6px;top:271.2px;width:42.6px;height:11.2px;border-radius:0 5px 5px 0;background:linear-gradient(#6b7078,#565a61);box-shadow:inset 0 0 0 0.8px rgba(30,30,30,0.7),0 0.8px 0 rgba(200,200,200,0.15)"></div><span class="t tc" style="left:242.1px;width:200px;top:271.3px;line-height:12px;font-size:8.5px;color:#d6e8ea;letter-spacing:-0.17px;-webkit-text-stroke:0.14px currentColor;">Normal</span><span class="t" style="left:196.9px;top:285.9px;line-height:12px;font-size:6.9px;color:#d4d4d4;">Location:</span><span class="t" style="left:254.4px;top:285.9px;line-height:12px;font-size:6.9px;color:#d4d4d4;">Rotation:</span><span class="t" style="left:313px;top:285.9px;line-height:12px;font-size:6.9px;color:#d4d4d4;">Scale:</span><div style="left:193.3px;top:297px;width:52.4px;height:33.8px;border-radius:5px;background:#3c3c3c;box-shadow:inset 0 0 0 1px rgba(30,30,30,0.5),0 0.8px 0 rgba(200,200,200,0.15)"></div><div style="left:194.3px;top:307.77px;width:50.4px;height:1px;background:#575757"></div><div style="left:194.3px;top:319.03px;width:50.4px;height:1px;background:#575757"></div><svg class="ic" style="left:196.3px;top:300.63px" width="3" height="4"><path d="M3 0 L0 2 L3 4 Z" fill="#161616"/></svg><svg class="ic" style="left:239.7px;top:300.63px" width="3" height="4"><path d="M0 0 L3 2 L0 4 Z" fill="#161616"/></svg><span class="t" style="left:201.3px;top:296.93px;line-height:12px;font-size:8.5px;color:#d6e8ea;letter-spacing:-0.17px;-webkit-text-stroke:0.14px currentColor;">X:</span><span class="t" style="right:781.5px;top:296.93px;line-height:12px;font-size:8.5px;color:#d6e8ea;letter-spacing:-0.17px;-webkit-text-stroke:0.14px currentColor;">0.000</span><svg class="ic" style="left:196.3px;top:311.9px" width="3" height="4"><path d="M3 0 L0 2 L3 4 Z" fill="#161616"/></svg><svg class="ic" style="left:239.7px;top:311.9px" width="3" height="4"><path d="M0 0 L3 2 L0 4 Z" fill="#161616"/></svg><span class="t" style="left:201.3px;top:308.2px;line-height:12px;font-size:8.5px;color:#d6e8ea;letter-spacing:-0.17px;-webkit-text-stroke:0.14px currentColor;">Y:</span><span class="t" style="right:781.5px;top:308.2px;line-height:12px;font-size:8.5px;color:#d6e8ea;letter-spacing:-0.17px;-webkit-text-stroke:0.14px currentColor;">0.000</span><svg class="ic" style="left:196.3px;top:323.17px" width="3" height="4"><path d="M3 0 L0 2 L3 4 Z" fill="#161616"/></svg><svg class="ic" style="left:239.7px;top:323.17px" width="3" height="4"><path d="M0 0 L3 2 L0 4 Z" fill="#161616"/></svg><span class="t" style="left:201.3px;top:319.47px;line-height:12px;font-size:8.5px;color:#d6e8ea;letter-spacing:-0.17px;-webkit-text-stroke:0.14px currentColor;">Z:</span><span class="t" style="right:781.5px;top:319.47px;line-height:12px;font-size:8.5px;color:#d6e8ea;letter-spacing:-0.17px;-webkit-text-stroke:0.14px currentColor;">0.000</span><div style="left:251.8px;top:297px;width:52.4px;height:33.8px;border-radius:5px;background:#3c3c3c;box-shadow:inset 0 0 0 1px rgba(30,30,30,0.5),0 0.8px 0 rgba(200,200,200,0.15)"></div><div style="left:252.8px;top:307.77px;width:50.4px;height:1px;background:#575757"></div><div style="left:252.8px;top:319.03px;width:50.4px;height:1px;background:#575757"></div><svg class="ic" style="left:254.8px;top:300.63px" width="3" height="4"><path d="M3 0 L0 2 L3 4 Z" fill="#161616"/></svg><svg class="ic" style="left:298.2px;top:300.63px" width="3" height="4"><path d="M0 0 L3 2 L0 4 Z" fill="#161616"/></svg><span class="t" style="left:259.8px;top:296.93px;line-height:12px;font-size:8.5px;color:#d6e8ea;letter-spacing:-0.17px;-webkit-text-stroke:0.14px currentColor;">X:</span><span class="t" style="right:723px;top:296.93px;line-height:12px;font-size:8.5px;color:#d6e8ea;letter-spacing:-0.17px;-webkit-text-stroke:0.14px currentColor;">148°</span><svg class="ic" style="left:254.8px;top:311.9px" width="3" height="4"><path d="M3 0 L0 2 L3 4 Z" fill="#161616"/></svg><svg class="ic" style="left:298.2px;top:311.9px" width="3" height="4"><path d="M0 0 L3 2 L0 4 Z" fill="#161616"/></svg><span class="t" style="left:259.8px;top:308.2px;line-height:12px;font-size:8.5px;color:#d6e8ea;letter-spacing:-0.17px;-webkit-text-stroke:0.14px currentColor;">Y:</span><span class="t" style="right:723px;top:308.2px;line-height:12px;font-size:8.5px;color:#d6e8ea;letter-spacing:-0.17px;-webkit-text-stroke:0.14px currentColor;">163°</span><svg class="ic" style="left:254.8px;top:323.17px" width="3" height="4"><path d="M3 0 L0 2 L3 4 Z" fill="#161616"/></svg><svg class="ic" style="left:298.2px;top:323.17px" width="3" height="4"><path d="M0 0 L3 2 L0 4 Z" fill="#161616"/></svg><span class="t" style="left:259.8px;top:319.47px;line-height:12px;font-size:8.5px;color:#d6e8ea;letter-spacing:-0.17px;-webkit-text-stroke:0.14px currentColor;">Z:</span><span class="t" style="right:723px;top:319.47px;line-height:12px;font-size:8.5px;color:#d6e8ea;letter-spacing:-0.17px;-webkit-text-stroke:0.14px currentColor;">-39°</span><div style="left:309.4px;top:297px;width:53.3px;height:33.8px;border-radius:5px;background:#3c3c3c;box-shadow:inset 0 0 0 1px rgba(30,30,30,0.5),0 0.8px 0 rgba(200,200,200,0.15)"></div><div style="left:310.4px;top:307.77px;width:51.3px;height:1px;background:#575757"></div><div style="left:310.4px;top:319.03px;width:51.3px;height:1px;background:#575757"></div><svg class="ic" style="left:312.4px;top:300.63px" width="3" height="4"><path d="M3 0 L0 2 L3 4 Z" fill="#161616"/></svg><svg class="ic" style="left:356.7px;top:300.63px" width="3" height="4"><path d="M0 0 L3 2 L0 4 Z" fill="#161616"/></svg><span class="t" style="left:317.4px;top:296.93px;line-height:12px;font-size:8.5px;color:#d6e8ea;letter-spacing:-0.17px;-webkit-text-stroke:0.14px currentColor;">X:</span><span class="t" style="right:664.5px;top:296.93px;line-height:12px;font-size:8.5px;color:#d6e8ea;letter-spacing:-0.17px;-webkit-text-stroke:0.14px currentColor;">1.000</span><svg class="ic" style="left:312.4px;top:311.9px" width="3" height="4"><path d="M3 0 L0 2 L3 4 Z" fill="#161616"/></svg><svg class="ic" style="left:356.7px;top:311.9px" width="3" height="4"><path d="M0 0 L3 2 L0 4 Z" fill="#161616"/></svg><span class="t" style="left:317.4px;top:308.2px;line-height:12px;font-size:8.5px;color:#d6e8ea;letter-spacing:-0.17px;-webkit-text-stroke:0.14px currentColor;">Y:</span><span class="t" style="right:664.5px;top:308.2px;line-height:12px;font-size:8.5px;color:#d6e8ea;letter-spacing:-0.17px;-webkit-text-stroke:0.14px currentColor;">1.000</span><svg class="ic" style="left:312.4px;top:323.17px" width="3" height="4"><path d="M3 0 L0 2 L3 4 Z" fill="#161616"/></svg><svg class="ic" style="left:356.7px;top:323.17px" width="3" height="4"><path d="M0 0 L3 2 L0 4 Z" fill="#161616"/></svg><span class="t" style="left:317.4px;top:319.47px;line-height:12px;font-size:8.5px;color:#d6e8ea;letter-spacing:-0.17px;-webkit-text-stroke:0.14px currentColor;">Z:</span><span class="t" style="right:664.5px;top:319.47px;line-height:12px;font-size:8.5px;color:#d6e8ea;letter-spacing:-0.17px;-webkit-text-stroke:0.14px currentColor;">1.000</span><div style="left:195.1px;top:336.8px;width:6.2px;height:6.2px;border-radius:50%;background:radial-gradient(circle at 50% 40%,#5a6672,#46505b);box-shadow:0 0 0 0.6px #333"></div><span class="t" style="left:206.5px;top:334.2px;line-height:12px;font-size:8.5px;color:#c4e0e4;letter-spacing:-0.17px;-webkit-text-stroke:0.14px currentColor;">Min</span><div style="left:193.1px;top:345.3px;width:82.9px;height:33.7px;border-radius:5px;background:#4f4f4f;box-shadow:inset 0 0 0 1px rgba(50,50,50,0.5),0 0.8px 0 rgba(200,200,200,0.12)"></div><div style="left:194.1px;top:356.03px;width:80.9px;height:1px;background:#5f5f5f"></div><div style="left:194.1px;top:367.27px;width:80.9px;height:1px;background:#5f5f5f"></div><svg class="ic" style="left:196.1px;top:348.92px" width="3" height="4"><path d="M3 0 L0 2 L3 4 Z" fill="#2c2c2c"/></svg><svg class="ic" style="left:270px;top:348.92px" width="3" height="4"><path d="M0 0 L3 2 L0 4 Z" fill="#2c2c2c"/></svg><span class="t" style="left:201.1px;top:345.22px;line-height:12px;font-size:8.5px;color:#8f9a9c;letter-spacing:-0.17px;-webkit-text-stroke:0.14px currentColor;">X:</span><span class="t" style="right:751.2px;top:345.22px;line-height:12px;font-size:8.5px;color:#8f9a9c;letter-spacing:-0.17px;-webkit-text-stroke:0.14px currentColor;">0.000</span><svg class="ic" style="left:196.1px;top:360.15px" width="3" height="4"><path d="M3 0 L0 2 L3 4 Z" fill="#2c2c2c"/></svg><svg class="ic" style="left:270px;top:360.15px" width="3" height="4"><path d="M0 0 L3 2 L0 4 Z" fill="#2c2c2c"/></svg><span class="t" style="left:201.1px;top:356.45px;line-height:12px;font-size:8.5px;color:#8f9a9c;letter-spacing:-0.17px;-webkit-text-stroke:0.14px currentColor;">Y:</span><span class="t" style="right:751.2px;top:356.45px;line-height:12px;font-size:8.5px;color:#8f9a9c;letter-spacing:-0.17px;-webkit-text-stroke:0.14px currentColor;">0.000</span><svg class="ic" style="left:196.1px;top:371.38px" width="3" height="4"><path d="M3 0 L0 2 L3 4 Z" fill="#2c2c2c"/></svg><svg class="ic" style="left:270px;top:371.38px" width="3" height="4"><path d="M0 0 L3 2 L0 4 Z" fill="#2c2c2c"/></svg><span class="t" style="left:201.1px;top:367.68px;line-height:12px;font-size:8.5px;color:#8f9a9c;letter-spacing:-0.17px;-webkit-text-stroke:0.14px currentColor;">Z:</span><span class="t" style="right:751.2px;top:367.68px;line-height:12px;font-size:8.5px;color:#8f9a9c;letter-spacing:-0.17px;-webkit-text-stroke:0.14px currentColor;">0.000</span><div style="left:282.2px;top:336.8px;width:6.2px;height:6.2px;border-radius:50%;background:radial-gradient(circle at 50% 40%,#5a6672,#46505b);box-shadow:0 0 0 0.6px #333"></div><span class="t" style="left:293.6px;top:334.2px;line-height:12px;font-size:8.5px;color:#c4e0e4;letter-spacing:-0.17px;-webkit-text-stroke:0.14px currentColor;">Max</span><div style="left:280.3px;top:345.3px;width:82.7px;height:33.7px;border-radius:5px;background:#4f4f4f;box-shadow:inset 0 0 0 1px rgba(50,50,50,0.5),0 0.8px 0 rgba(200,200,200,0.12)"></div><div style="left:281.3px;top:356.03px;width:80.7px;height:1px;background:#5f5f5f"></div><div style="left:281.3px;top:367.27px;width:80.7px;height:1px;background:#5f5f5f"></div><svg class="ic" style="left:283.3px;top:348.92px" width="3" height="4"><path d="M3 0 L0 2 L3 4 Z" fill="#2c2c2c"/></svg><svg class="ic" style="left:357px;top:348.92px" width="3" height="4"><path d="M0 0 L3 2 L0 4 Z" fill="#2c2c2c"/></svg><span class="t" style="left:288.3px;top:345.22px;line-height:12px;font-size:8.5px;color:#8f9a9c;letter-spacing:-0.17px;-webkit-text-stroke:0.14px currentColor;">X:</span><span class="t" style="right:664.2px;top:345.22px;line-height:12px;font-size:8.5px;color:#8f9a9c;letter-spacing:-0.17px;-webkit-text-stroke:0.14px currentColor;">1.000</span><svg class="ic" style="left:283.3px;top:360.15px" width="3" height="4"><path d="M3 0 L0 2 L3 4 Z" fill="#2c2c2c"/></svg><svg class="ic" style="left:357px;top:360.15px" width="3" height="4"><path d="M0 0 L3 2 L0 4 Z" fill="#2c2c2c"/></svg><span class="t" style="left:288.3px;top:356.45px;line-height:12px;font-size:8.5px;color:#8f9a9c;letter-spacing:-0.17px;-webkit-text-stroke:0.14px currentColor;">Y:</span><span class="t" style="right:664.2px;top:356.45px;line-height:12px;font-size:8.5px;color:#8f9a9c;letter-spacing:-0.17px;-webkit-text-stroke:0.14px currentColor;">1.000</span><svg class="ic" style="left:283.3px;top:371.38px" width="3" height="4"><path d="M3 0 L0 2 L3 4 Z" fill="#2c2c2c"/></svg><svg class="ic" style="left:357px;top:371.38px" width="3" height="4"><path d="M0 0 L3 2 L0 4 Z" fill="#2c2c2c"/></svg><span class="t" style="left:288.3px;top:367.68px;line-height:12px;font-size:8.5px;color:#8f9a9c;letter-spacing:-0.17px;-webkit-text-stroke:0.14px currentColor;">Z:</span><span class="t" style="right:664.2px;top:367.68px;line-height:12px;font-size:8.5px;color:#8f9a9c;letter-spacing:-0.17px;-webkit-text-stroke:0.14px currentColor;">1.000</span><span class="t" style="left:197.4px;top:382.9px;line-height:12px;font-size:6.9px;color:#d4d4d4;">Vector</span><div style="left:244.2px;top:412.9px;width:182.45px;height:151.18px;border-radius:5px;background:rgba(98,97,100,0.8);overflow:hidden;box-shadow:0 0 0 1px rgba(20,20,20,0.5),2px 3px 5px 2px rgba(0,0,0,0.5);"><div style="position:absolute;left:0;top:0;width:100%;height:10.8px;background:linear-gradient(#6868a3,#60609a)"></div></div><svg class="ic" style="left:247.4px;top:415.7px" width="6" height="6"><path d="M0 0 H5.4 L2.7 5.4 Z" fill="#e2e2ee" opacity="0.85"/></svg><span class="t" style="left:256.2px;top:413.8px;line-height:12px;font-size:7.0px;color:#e2e2ee;">Mapping</span><span class="t" style="right:602.8px;top:427.94px;line-height:12px;font-size:6.9px;color:#d4d4d4;">Vector</span><div style="left:249.54px;top:441.17px;width:41.63px;height:11.2px;border-radius:5px 0 0 5px;background:linear-gradient(#6b7078,#565a61);box-shadow:inset 0 0 0 0.8px rgba(30,30,30,0.7),0 0.8px 0 rgba(200,200,200,0.15)"></div><span class="t tc" style="left:171.56px;width:200px;top:441.27px;line-height:12px;font-size:8.5px;color:#d6e8ea;letter-spacing:-0.17px;-webkit-text-stroke:0.14px currentColor;">Texture</span><div style="left:291.17px;top:441.17px;width:43.55px;height:11.2px;border-radius:0;background:linear-gradient(#6587ad,#48698f);box-shadow:inset 0 0 0 0.8px rgba(30,30,30,0.7),0 0.8px 0 rgba(200,200,200,0.15)"></div><span class="t tc" style="left:214.15px;width:200px;top:441.27px;line-height:12px;font-size:8.5px;color:#0e1622;letter-spacing:-0.17px;-webkit-text-stroke:0.14px currentColor;">Point</span><div style="left:334.72px;top:441.17px;width:42.24px;height:11.2px;border-radius:0;background:linear-gradient(#6b7078,#565a61);box-shadow:inset 0 0 0 0.8px rgba(30,30,30,0.7),0 0.8px 0 rgba(200,200,200,0.15)"></div><span class="t tc" style="left:257.04px;width:200px;top:441.27px;line-height:12px;font-size:8.5px;color:#d6e8ea;letter-spacing:-0.17px;-webkit-text-stroke:0.14px currentColor;">Vector</span><div style="left:376.95px;top:441.17px;width:42.94px;height:11.2px;border-radius:0 5px 5px 0;background:linear-gradient(#6b7078,#565a61);box-shadow:inset 0 0 0 0.8px rgba(30,30,30,0.7),0 0.8px 0 rgba(200,200,200,0.15)"></div><span class="t tc" style="left:299.62px;width:200px;top:441.27px;line-height:12px;font-size:8.5px;color:#d6e8ea;letter-spacing:-0.17px;-webkit-text-stroke:0.14px currentColor;">Normal</span><span class="t" style="left:253.2px;top:455.71px;line-height:12px;font-size:6.9px;color:#d4d4d4;">Location:</span><span class="t" style="left:310.7px;top:455.71px;line-height:12px;font-size:6.9px;color:#d4d4d4;">Rotation:</span><span class="t" style="left:369.3px;top:455.71px;line-height:12px;font-size:6.9px;color:#d4d4d4;">Scale:</span><div style="left:249.64px;top:466.76px;width:52.82px;height:33.53px;border-radius:5px;background:#3c3c3c;box-shadow:inset 0 0 0 1px rgba(30,30,30,0.5),0 0.8px 0 rgba(200,200,200,0.15)"></div><div style="left:250.64px;top:477.44px;width:50.82px;height:1px;background:#575757"></div><div style="left:250.64px;top:488.61px;width:50.82px;height:1px;background:#575757"></div><svg class="ic" style="left:252.64px;top:470.35px" width="3" height="4"><path d="M3 0 L0 2 L3 4 Z" fill="#161616"/></svg><svg class="ic" style="left:296.46px;top:470.35px" width="3" height="4"><path d="M0 0 L3 2 L0 4 Z" fill="#161616"/></svg><span class="t" style="left:257.64px;top:466.65px;line-height:12px;font-size:8.5px;color:#d6e8ea;letter-spacing:-0.17px;-webkit-text-stroke:0.14px currentColor;">X:</span><span class="t" style="right:724.74px;top:466.65px;line-height:12px;font-size:8.5px;color:#d6e8ea;letter-spacing:-0.17px;-webkit-text-stroke:0.14px currentColor;">0.000</span><svg class="ic" style="left:252.64px;top:481.52px" width="3" height="4"><path d="M3 0 L0 2 L3 4 Z" fill="#161616"/></svg><svg class="ic" style="left:296.46px;top:481.52px" width="3" height="4"><path d="M0 0 L3 2 L0 4 Z" fill="#161616"/></svg><span class="t" style="left:257.64px;top:477.82px;line-height:12px;font-size:8.5px;color:#d6e8ea;letter-spacing:-0.17px;-webkit-text-stroke:0.14px currentColor;">Y:</span><span class="t" style="right:724.74px;top:477.82px;line-height:12px;font-size:8.5px;color:#d6e8ea;letter-spacing:-0.17px;-webkit-text-stroke:0.14px currentColor;">0.000</span><svg class="ic" style="left:252.64px;top:492.7px" width="3" height="4"><path d="M3 0 L0 2 L3 4 Z" fill="#161616"/></svg><svg class="ic" style="left:296.46px;top:492.7px" width="3" height="4"><path d="M0 0 L3 2 L0 4 Z" fill="#161616"/></svg><span class="t" style="left:257.64px;top:489px;line-height:12px;font-size:8.5px;color:#d6e8ea;letter-spacing:-0.17px;-webkit-text-stroke:0.14px currentColor;">Z:</span><span class="t" style="right:724.74px;top:489px;line-height:12px;font-size:8.5px;color:#d6e8ea;letter-spacing:-0.17px;-webkit-text-stroke:0.14px currentColor;">0.000</span><div style="left:308.61px;top:466.76px;width:52.82px;height:33.53px;border-radius:5px;background:#3c3c3c;box-shadow:inset 0 0 0 1px rgba(30,30,30,0.5),0 0.8px 0 rgba(200,200,200,0.15)"></div><div style="left:309.61px;top:477.44px;width:50.82px;height:1px;background:#575757"></div><div style="left:309.61px;top:488.61px;width:50.82px;height:1px;background:#575757"></div><svg class="ic" style="left:311.61px;top:470.35px" width="3" height="4"><path d="M3 0 L0 2 L3 4 Z" fill="#161616"/></svg><svg class="ic" style="left:355.43px;top:470.35px" width="3" height="4"><path d="M0 0 L3 2 L0 4 Z" fill="#161616"/></svg><span class="t" style="left:316.61px;top:466.65px;line-height:12px;font-size:8.5px;color:#d6e8ea;letter-spacing:-0.17px;-webkit-text-stroke:0.14px currentColor;">X:</span><span class="t" style="right:665.77px;top:466.65px;line-height:12px;font-size:8.5px;color:#d6e8ea;letter-spacing:-0.17px;-webkit-text-stroke:0.14px currentColor;">0°</span><svg class="ic" style="left:311.61px;top:481.52px" width="3" height="4"><path d="M3 0 L0 2 L3 4 Z" fill="#161616"/></svg><svg class="ic" style="left:355.43px;top:481.52px" width="3" height="4"><path d="M0 0 L3 2 L0 4 Z" fill="#161616"/></svg><span class="t" style="left:316.61px;top:477.82px;line-height:12px;font-size:8.5px;color:#d6e8ea;letter-spacing:-0.17px;-webkit-text-stroke:0.14px currentColor;">Y:</span><span class="t" style="right:665.77px;top:477.82px;line-height:12px;font-size:8.5px;color:#d6e8ea;letter-spacing:-0.17px;-webkit-text-stroke:0.14px currentColor;">0°</span><svg class="ic" style="left:311.61px;top:492.7px" width="3" height="4"><path d="M3 0 L0 2 L3 4 Z" fill="#161616"/></svg><svg class="ic" style="left:355.43px;top:492.7px" width="3" height="4"><path d="M0 0 L3 2 L0 4 Z" fill="#161616"/></svg><span class="t" style="left:316.61px;top:489px;line-height:12px;font-size:8.5px;color:#d6e8ea;letter-spacing:-0.17px;-webkit-text-stroke:0.14px currentColor;">Z:</span><span class="t" style="right:665.77px;top:489px;line-height:12px;font-size:8.5px;color:#d6e8ea;letter-spacing:-0.17px;-webkit-text-stroke:0.14px currentColor;">0°</span><div style="left:366.67px;top:466.76px;width:53.73px;height:33.53px;border-radius:5px;background:#3c3c3c;box-shadow:inset 0 0 0 1px rgba(30,30,30,0.5),0 0.8px 0 rgba(200,200,200,0.15)"></div><div style="left:367.67px;top:477.44px;width:51.73px;height:1px;background:#575757"></div><div style="left:367.67px;top:488.61px;width:51.73px;height:1px;background:#575757"></div><svg class="ic" style="left:369.67px;top:470.35px" width="3" height="4"><path d="M3 0 L0 2 L3 4 Z" fill="#161616"/></svg><svg class="ic" style="left:414.4px;top:470.35px" width="3" height="4"><path d="M0 0 L3 2 L0 4 Z" fill="#161616"/></svg><span class="t" style="left:374.67px;top:466.65px;line-height:12px;font-size:8.5px;color:#d6e8ea;letter-spacing:-0.17px;-webkit-text-stroke:0.14px currentColor;">X:</span><span class="t" style="right:606.8px;top:466.65px;line-height:12px;font-size:8.5px;color:#d6e8ea;letter-spacing:-0.17px;-webkit-text-stroke:0.14px currentColor;">1.000</span><svg class="ic" style="left:369.67px;top:481.52px" width="3" height="4"><path d="M3 0 L0 2 L3 4 Z" fill="#161616"/></svg><svg class="ic" style="left:414.4px;top:481.52px" width="3" height="4"><path d="M0 0 L3 2 L0 4 Z" fill="#161616"/></svg><span class="t" style="left:374.67px;top:477.82px;line-height:12px;font-size:8.5px;color:#d6e8ea;letter-spacing:-0.17px;-webkit-text-stroke:0.14px currentColor;">Y:</span><span class="t" style="right:606.8px;top:477.82px;line-height:12px;font-size:8.5px;color:#d6e8ea;letter-spacing:-0.17px;-webkit-text-stroke:0.14px currentColor;">1.000</span><svg class="ic" style="left:369.67px;top:492.7px" width="3" height="4"><path d="M3 0 L0 2 L3 4 Z" fill="#161616"/></svg><svg class="ic" style="left:414.4px;top:492.7px" width="3" height="4"><path d="M0 0 L3 2 L0 4 Z" fill="#161616"/></svg><span class="t" style="left:374.67px;top:489px;line-height:12px;font-size:8.5px;color:#d6e8ea;letter-spacing:-0.17px;-webkit-text-stroke:0.14px currentColor;">Z:</span><span class="t" style="right:606.8px;top:489px;line-height:12px;font-size:8.5px;color:#d6e8ea;letter-spacing:-0.17px;-webkit-text-stroke:0.14px currentColor;">1.000</span><div style="left:251.48px;top:506.62px;width:6.2px;height:6.2px;border-radius:50%;background:radial-gradient(circle at 50% 40%,#5a6672,#46505b);box-shadow:0 0 0 0.6px #333"></div><span class="t" style="left:262.88px;top:504.02px;line-height:12px;font-size:8.5px;color:#c4e0e4;letter-spacing:-0.17px;-webkit-text-stroke:0.14px currentColor;">Min</span><div style="left:249.44px;top:514.67px;width:83.56px;height:33.43px;border-radius:5px;background:#4f4f4f;box-shadow:inset 0 0 0 1px rgba(50,50,50,0.5),0 0.8px 0 rgba(200,200,200,0.12)"></div><div style="left:250.44px;top:525.32px;width:81.56px;height:1px;background:#5f5f5f"></div><div style="left:250.44px;top:536.46px;width:81.56px;height:1px;background:#5f5f5f"></div><svg class="ic" style="left:252.44px;top:518.25px" width="3" height="4"><path d="M3 0 L0 2 L3 4 Z" fill="#2c2c2c"/></svg><svg class="ic" style="left:327px;top:518.25px" width="3" height="4"><path d="M0 0 L3 2 L0 4 Z" fill="#2c2c2c"/></svg><span class="t" style="left:257.44px;top:514.55px;line-height:12px;font-size:8.5px;color:#8f9a9c;letter-spacing:-0.17px;-webkit-text-stroke:0.14px currentColor;">X:</span><span class="t" style="right:694.2px;top:514.55px;line-height:12px;font-size:8.5px;color:#8f9a9c;letter-spacing:-0.17px;-webkit-text-stroke:0.14px currentColor;">0.000</span><svg class="ic" style="left:252.44px;top:529.39px" width="3" height="4"><path d="M3 0 L0 2 L3 4 Z" fill="#2c2c2c"/></svg><svg class="ic" style="left:327px;top:529.39px" width="3" height="4"><path d="M0 0 L3 2 L0 4 Z" fill="#2c2c2c"/></svg><span class="t" style="left:257.44px;top:525.69px;line-height:12px;font-size:8.5px;color:#8f9a9c;letter-spacing:-0.17px;-webkit-text-stroke:0.14px currentColor;">Y:</span><span class="t" style="right:694.2px;top:525.69px;line-height:12px;font-size:8.5px;color:#8f9a9c;letter-spacing:-0.17px;-webkit-text-stroke:0.14px currentColor;">0.000</span><svg class="ic" style="left:252.44px;top:540.53px" width="3" height="4"><path d="M3 0 L0 2 L3 4 Z" fill="#2c2c2c"/></svg><svg class="ic" style="left:327px;top:540.53px" width="3" height="4"><path d="M0 0 L3 2 L0 4 Z" fill="#2c2c2c"/></svg><span class="t" style="left:257.44px;top:536.83px;line-height:12px;font-size:8.5px;color:#8f9a9c;letter-spacing:-0.17px;-webkit-text-stroke:0.14px currentColor;">Z:</span><span class="t" style="right:694.2px;top:536.83px;line-height:12px;font-size:8.5px;color:#8f9a9c;letter-spacing:-0.17px;-webkit-text-stroke:0.14px currentColor;">0.000</span><div style="left:339.28px;top:506.62px;width:6.2px;height:6.2px;border-radius:50%;background:radial-gradient(circle at 50% 40%,#5a6672,#46505b);box-shadow:0 0 0 0.6px #333"></div><span class="t" style="left:350.68px;top:504.02px;line-height:12px;font-size:8.5px;color:#c4e0e4;letter-spacing:-0.17px;-webkit-text-stroke:0.14px currentColor;">Max</span><div style="left:337.34px;top:514.67px;width:83.36px;height:33.43px;border-radius:5px;background:#4f4f4f;box-shadow:inset 0 0 0 1px rgba(50,50,50,0.5),0 0.8px 0 rgba(200,200,200,0.12)"></div><div style="left:338.34px;top:525.32px;width:81.36px;height:1px;background:#5f5f5f"></div><div style="left:338.34px;top:536.46px;width:81.36px;height:1px;background:#5f5f5f"></div><svg class="ic" style="left:340.34px;top:518.25px" width="3" height="4"><path d="M3 0 L0 2 L3 4 Z" fill="#2c2c2c"/></svg><svg class="ic" style="left:414.7px;top:518.25px" width="3" height="4"><path d="M0 0 L3 2 L0 4 Z" fill="#2c2c2c"/></svg><span class="t" style="left:345.34px;top:514.55px;line-height:12px;font-size:8.5px;color:#8f9a9c;letter-spacing:-0.17px;-webkit-text-stroke:0.14px currentColor;">X:</span><span class="t" style="right:606.5px;top:514.55px;line-height:12px;font-size:8.5px;color:#8f9a9c;letter-spacing:-0.17px;-webkit-text-stroke:0.14px currentColor;">1.000</span><svg class="ic" style="left:340.34px;top:529.39px" width="3" height="4"><path d="M3 0 L0 2 L3 4 Z" fill="#2c2c2c"/></svg><svg class="ic" style="left:414.7px;top:529.39px" width="3" height="4"><path d="M0 0 L3 2 L0 4 Z" fill="#2c2c2c"/></svg><span class="t" style="left:345.34px;top:525.69px;line-height:12px;font-size:8.5px;color:#8f9a9c;letter-spacing:-0.17px;-webkit-text-stroke:0.14px currentColor;">Y:</span><span class="t" style="right:606.5px;top:525.69px;line-height:12px;font-size:8.5px;color:#8f9a9c;letter-spacing:-0.17px;-webkit-text-stroke:0.14px currentColor;">1.000</span><svg class="ic" style="left:340.34px;top:540.53px" width="3" height="4"><path d="M3 0 L0 2 L3 4 Z" fill="#2c2c2c"/></svg><svg class="ic" style="left:414.7px;top:540.53px" width="3" height="4"><path d="M0 0 L3 2 L0 4 Z" fill="#2c2c2c"/></svg><span class="t" style="left:345.34px;top:536.83px;line-height:12px;font-size:8.5px;color:#8f9a9c;letter-spacing:-0.17px;-webkit-text-stroke:0.14px currentColor;">Z:</span><span class="t" style="right:606.5px;top:536.83px;line-height:12px;font-size:8.5px;color:#8f9a9c;letter-spacing:-0.17px;-webkit-text-stroke:0.14px currentColor;">1.000</span><span class="t" style="left:253.78px;top:552.34px;line-height:12px;font-size:6.9px;color:#d4d4d4;">Vector</span><div style="left:67.9px;top:421.3px;width:79.2px;height:127.6px;border-radius:5px;background:rgba(98,97,100,0.8);overflow:hidden;box-shadow:0 0 0 1px rgba(20,20,20,0.5),2px 3px 5px 2px rgba(0,0,0,0.5);"><div style="position:absolute;left:0;top:0;width:100%;height:10.4px;background:#666d79"></div></div><svg class="ic" style="left:71.3px;top:424.4px" width="6" height="6"><path d="M0 0 H4.59 L2.29 4.59 Z" fill="#d8d8da" opacity="0.85"/></svg><span class="t" style="left:79.4px;top:421.9px;line-height:12px;font-size:6.95px;color:#d8d8da;">Texture Coordinate</span><span class="t" style="right:883px;top:435.7px;line-height:12px;font-size:6.9px;color:#d4d4d4;">Generated</span><span class="t" style="right:883px;top:447.8px;line-height:12px;font-size:6.9px;color:#d4d4d4;">Normal</span><span class="t" style="right:883px;top:459.9px;line-height:12px;font-size:6.9px;color:#d4d4d4;">UV</span><span class="t" style="right:883px;top:471.9px;line-height:12px;font-size:6.9px;color:#d4d4d4;">Object</span><span class="t" style="right:883px;top:484px;line-height:12px;font-size:6.9px;color:#d4d4d4;">Camera</span><span class="t" style="right:883px;top:495.6px;line-height:12px;font-size:6.9px;color:#d4d4d4;">Window</span><span class="t" style="right:883px;top:507.5px;line-height:12px;font-size:6.9px;color:#d4d4d4;">Reflection</span><span class="t" style="right:920.3px;top:522.6px;line-height:12px;font-size:6.9px;color:#d4d4d4;">Object</span><div style="left:100.6px;top:521.2px;width:39px;height:10.1px;border-radius:5px;background:linear-gradient(#60646a,#4e5257);box-shadow:inset 0 0 0 1px rgba(25,25,25,0.7),0 0.8px 0 rgba(200,200,200,0.15)"></div><svg class="ic" style="left:103px;top:522.4px" width="8" height="8.2"><rect x="0.5" y="0.5" width="7" height="7.2" rx="1.6" fill="#d88a30" stroke="#3a2408" stroke-width="0.9"/><path d="M2.2 2.4 L4.2 1.8 L6 2.6 L6 5.6 L4 6.4 L2.2 5.6 Z" fill="#f0a850"/><path d="M2.2 2.4 L4 3.2 L6 2.6 M4 3.2 V6.4" stroke="#ffd9a0" stroke-width="0.5" fill="none"/></svg><svg class="ic" style="left:131.8px;top:523.2px" width="7" height="6.4"><path d="M0.8 5.8 L4.2 2.4" stroke="#d8d8d8" stroke-width="1.2" stroke-linecap="round"/><path d="M3.6 1.9 L5.1 0.5 L6.5 1.9 L5 3.3 Z" fill="#0c0c0c"/></svg><div style="left:74.6px;top:537.9px;width:6.4px;height:6.4px;border-radius:50%;background:radial-gradient(circle at 50% 40%,#5a6672,#46505b);box-shadow:0 0 0 0.6px #333"></div><span class="t" style="left:86.1px;top:535.7px;line-height:12px;font-size:8.5px;color:#bcdadd;letter-spacing:-0.17px;-webkit-text-stroke:0.14px currentColor;">From Dupli</span><div style="left:913px;top:79px;width:80px;height:38.8px;border-radius:5px;background:rgba(98,97,100,0.8);overflow:hidden;border:1px solid #e6e6e6;box-sizing:border-box;box-shadow:0 2px 6px rgba(0,0,0,0.45);"><div style="position:absolute;left:0;top:0;width:100%;height:11.5px;background:linear-gradient(#7a5456,#6f5456 60%,#625a5c)"></div></div><svg class="ic" style="left:916.2px;top:82.95px" width="6" height="6"><path d="M0 0 H5.4 L2.7 5.4 Z" fill="#e8d4d4" opacity="0.85"/></svg><span class="t" style="left:925px;top:81.05px;line-height:12px;font-size:6.95px;color:#e8d4d4;">World Output</span><span class="t" style="left:922px;top:91.9px;line-height:12px;font-size:6.9px;color:#d4d4d4;">Surface</span><span class="t" style="left:922px;top:104.5px;line-height:12px;font-size:6.9px;color:#d4d4d4;">Volume</span><div class="sk" style="left:780.5px;top:68.6px;background:#63c763"></div><div class="sk" style="left:780.5px;top:80.9px;background:#c7c729"></div><div class="sk" style="left:780.5px;top:93.4px;background:#a1a1a1"></div><div class="sk" style="left:780.5px;top:105.5px;background:#c7c729"></div><div class="sk" style="left:561.7px;top:134.6px;background:#a1a1a1"></div><div class="sk" style="left:561.7px;top:147px;background:#c7c729"></div><div class="sk" style="left:561.7px;top:159.5px;background:#c7c729"></div><div class="sk" style="left:561.7px;top:171.9px;background:#c7c729"></div><div class="sk" style="left:561.7px;top:184.3px;background:#c7c729"></div><div class="sk" style="left:561.7px;top:196.8px;background:#a1a1a1"></div><div class="sk" style="left:561.7px;top:209.3px;background:#c7c729"></div><div class="sk" style="left:561.7px;top:222.1px;background:#a1a1a1"></div><div class="sk" style="left:561.7px;top:234.8px;background:#a1a1a1"></div><div class="sk" style="left:561.7px;top:247.3px;background:#a1a1a1"></div><div class="sk" style="left:561.7px;top:259.5px;background:#a1a1a1"></div><div class="sk" style="left:561.7px;top:271.9px;background:#a1a1a1"></div><div class="sk" style="left:561.7px;top:284.3px;background:#a1a1a1"></div><div class="sk" style="left:561.7px;top:296.8px;background:#a1a1a1"></div><div class="sk" style="left:561.7px;top:309.3px;background:#a1a1a1"></div><div class="sk" style="left:561.7px;top:321.8px;background:#a1a1a1"></div><div class="sk" style="left:561.7px;top:334.1px;background:#a1a1a1"></div><div class="sk" style="left:561.7px;top:346.5px;background:#a1a1a1"></div><div class="sk" style="left:561.7px;top:358.9px;background:#a1a1a1"></div><div class="sk" style="left:561.7px;top:371.5px;background:#6363c7"></div><div class="sk" style="left:561.7px;top:384px;background:#6363c7"></div><div class="sk" style="left:561.7px;top:396.7px;background:#a1a1a1"></div><div class="sk" style="left:561.7px;top:408.7px;background:#c7c729"></div><div class="sk" style="left:561.7px;top:420.5px;background:#a1a1a1"></div><div class="sk" style="left:561.7px;top:432.3px;background:#a1a1a1"></div><div class="sk" style="left:561.7px;top:444.2px;background:#a1a1a1"></div><div class="sk" style="left:561.7px;top:456px;background:#a1a1a1"></div><div class="sk" style="left:561.7px;top:467.9px;background:#a1a1a1"></div><div class="sk" style="left:561.7px;top:479.7px;background:#a1a1a1"></div><div class="sk" style="left:561.7px;top:491.6px;background:#a1a1a1"></div><div class="sk" style="left:561.7px;top:503.4px;background:#a1a1a1"></div><div class="sk" style="left:561.7px;top:515.3px;background:#a1a1a1"></div><div class="sk" style="left:561.7px;top:527.6px;background:#a1a1a1"></div><div class="sk" style="left:349.4px;top:72.5px;background:#c7c729"></div><div class="sk" style="left:264.1px;top:166.5px;background:#6363c7"></div><div class="sk" style="left:365.4px;top:258.6px;background:#6363c7"></div><div class="sk" style="left:184.4px;top:383.8px;background:#6363c7"></div><div class="sk" style="left:423.1px;top:428.7px;background:#6363c7"></div><div class="sk" style="left:240.7px;top:553.5px;background:#6363c7"></div><div class="sk" style="left:143.6px;top:436.9px;background:#6363c7"></div><div class="sk" style="left:143.6px;top:449px;background:#6363c7"></div><div class="sk" style="left:143.6px;top:461.1px;background:#6363c7"></div><div class="sk" style="left:143.6px;top:473.1px;background:#6363c7"></div><div class="sk" style="left:143.6px;top:485.2px;background:#6363c7"></div><div class="sk" style="left:143.6px;top:496.8px;background:#6363c7"></div><div class="sk" style="left:143.6px;top:508.7px;background:#6363c7"></div><div class="sk" style="left:909.9px;top:92.9px;background:#63c763"></div><div class="sk" style="left:909.9px;top:105.5px;background:#63c763"></div>
</div></body></html>
